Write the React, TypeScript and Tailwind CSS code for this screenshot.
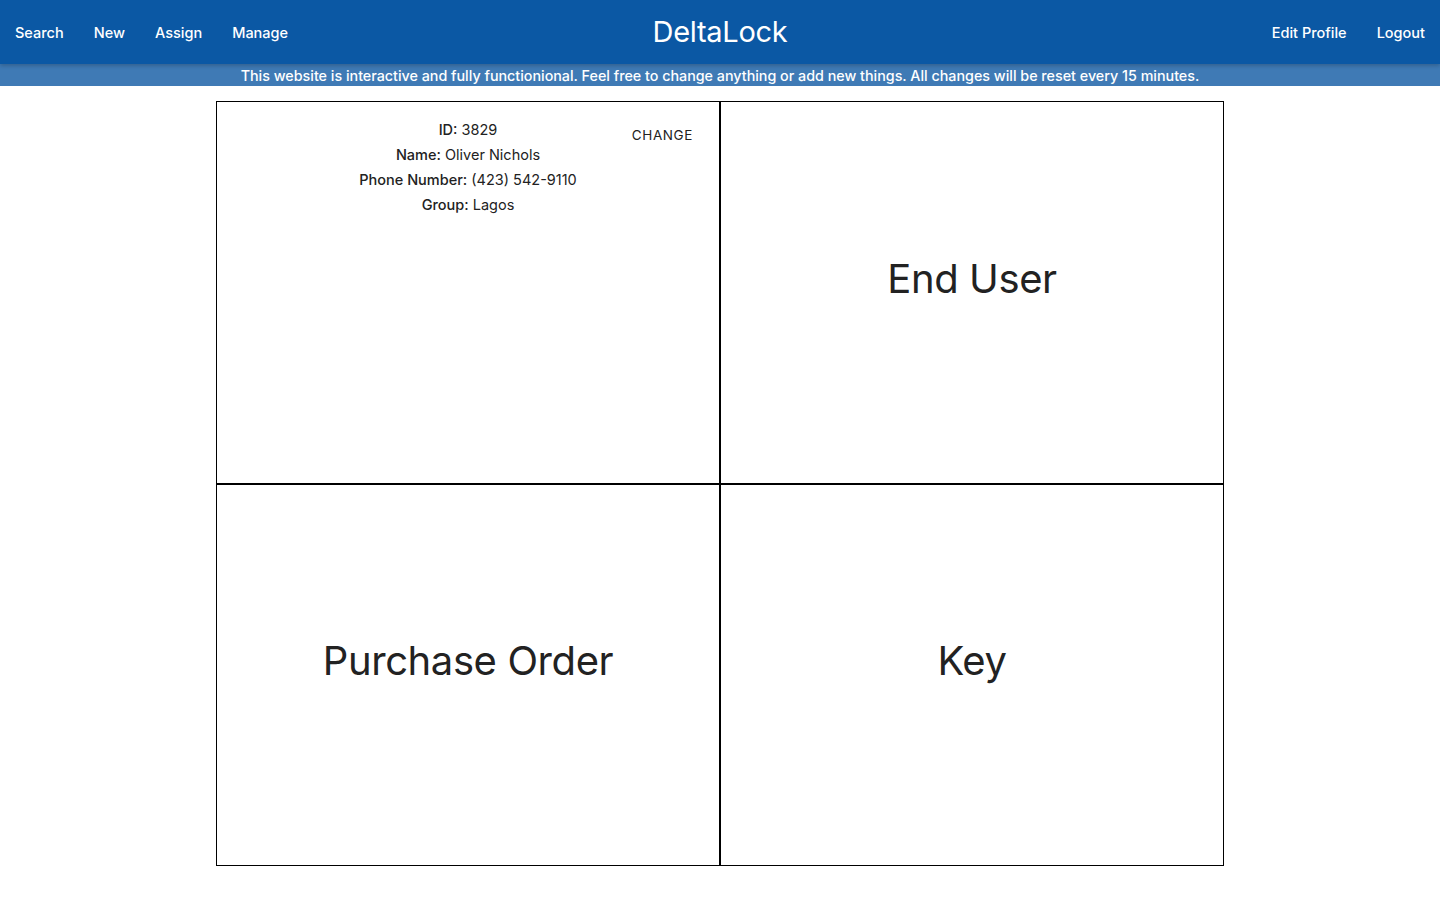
import React from 'react';

const font = { fontFamily: 'Inter, "Noto Sans", sans-serif' };

function Cell({ children, className = '' }: { children?: React.ReactNode; className?: string }) {
  return <div className={`relative border border-black ${className}`}>{children}</div>;
}

export default function App() {
  return (
    <div className="min-h-screen bg-white" style={font}>
      <nav className="h-16 bg-[#0b58a4] flex items-center justify-between relative shadow-[0_2px_4px_rgba(0,0,0,0.2)] z-10">
        <ul className="flex items-center text-white text-[14.5px] font-medium pt-[1px]">
          {['Search', 'New', 'Assign', 'Manage'].map((l) => (
            <li key={l} className="px-[15px]">{l}</li>
          ))}
        </ul>
        <div className="absolute left-1/2 -translate-x-1/2 text-white text-[29px] font-normal tracking-[-0.3px]">DeltaLock</div>
        <ul className="flex items-center text-white text-[14.5px] font-medium pt-[1px]">
          {['Edit Profile', 'Logout'].map((l) => (
            <li key={l} className="px-[15px]">{l}</li>
          ))}
        </ul>
      </nav>
      <div className="h-[22px] bg-[#3f7ab5] text-white text-[14.3px] font-medium flex items-center justify-center pt-[1px]">
        This website is interactive and fully functionional. Feel free to change anything or add new things. All changes will be reset every 15 minutes.
      </div>
      <div className="w-[1008px] mx-auto mt-[15px] grid grid-cols-2 grid-rows-[383px_382px]">
        <Cell>
          <div className="pt-[15px] text-center text-[14.5px] leading-[25px] text-[#222]">
            <div><span className="font-medium">ID:</span> 3829</div>
            <div><span className="font-medium">Name:</span> Oliver Nichols</div>
            <div><span className="font-medium">Phone Number:</span> (423) 542-9110</div>
            <div><span className="font-medium">Group:</span> Lagos</div>
          </div>
          <button className="absolute top-[23px] right-[26px] text-[13.5px] leading-[20px] tracking-[0.6px] uppercase text-[#222]">Change</button>
        </Cell>
        <Cell className="flex items-center justify-center">
          <h2 className="text-[40px] text-[#222] pb-[28px] tracking-[-0.4px]">End User</h2>
        </Cell>
        <Cell className="flex items-center justify-center">
          <h2 className="text-[40px] text-[#222] pb-[28px] tracking-[-0.4px]">Purchase Order</h2>
        </Cell>
        <Cell className="flex items-center justify-center">
          <h2 className="text-[40px] text-[#222] pb-[28px] tracking-[-0.4px]">Key</h2>
        </Cell>
      </div>
    </div>
  );
}
